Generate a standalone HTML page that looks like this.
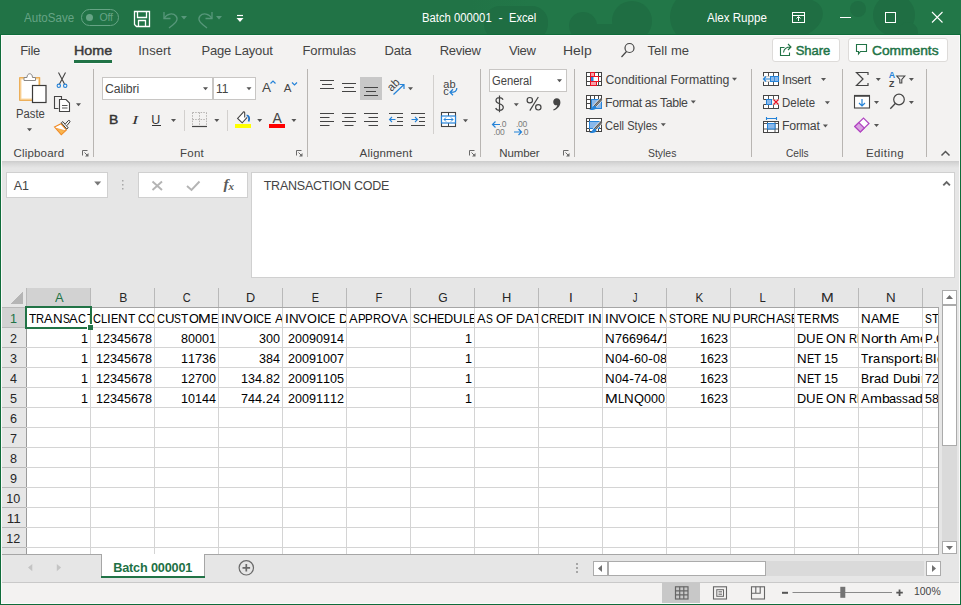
<!DOCTYPE html>
<html>
<head>
<meta charset="utf-8">
<title>Batch 000001 - Excel</title>
<style>
*{box-sizing:border-box;margin:0;padding:0}
html,body{width:961px;height:605px;overflow:hidden;background:#f3f2f1}
body{font-family:"Liberation Sans",sans-serif;font-size:12px;color:#444;position:relative}
.a{position:absolute}
.t{position:absolute;white-space:nowrap;line-height:1}
#title{left:0;top:0;width:961px;height:34px;background:#217346}
#tabs{left:0;top:34px;width:961px;height:31px;background:#f3f2f1}
#ribbon{left:0;top:65px;width:961px;height:96px;background:#f3f2f1}
#shadow{left:0;top:161px;width:961px;height:7px;background:linear-gradient(#cbcbcb,#d6d6d6 30%,#e6e6e6)}
#fbar{left:0;top:168px;width:961px;height:120px;background:#e6e6e6}
#grid{left:2px;top:288px;width:937px;height:266px;background:#fff;overflow:hidden}
#sheetbar{left:0;top:555px;width:961px;height:28px;background:#e6e6e6}
#status{left:0;top:583px;width:961px;height:22px;background:#f3f2f1}
#frame{left:0;top:34px;width:961px;height:571px;border:1px solid #0f6c3a;pointer-events:none}
#frame2{left:1px;top:35px;width:959px;height:569px;border:1px solid #fbfafa;pointer-events:none}
.sep{position:absolute;top:69px;width:1px;height:88px;background:#b8b5b2}
.ssep{position:absolute;width:1px;background:#d2d0ce}
.cell{position:absolute;height:20px;color:#000;line-height:20px;white-space:nowrap;overflow:hidden}
.cell span{position:absolute;top:1px;white-space:nowrap}
.ch{position:absolute;top:0;height:19px;width:64px;text-align:center;font-size:14px;line-height:21px;color:#262626}
.rh{position:absolute;left:0;width:24px;height:20px;text-align:center;font-size:14px;line-height:21px;color:#262626}
</style>
</head>
<body>
<div id="title" class="a"></div>
<div id="tabs" class="a"></div>
<div id="ribbon" class="a"></div>
<div id="shadow" class="a"></div>
<div id="fbar" class="a"></div>

<!--TITLE-->
<svg class="a" style="left:0;top:0" width="961" height="34">
<defs><linearGradient id="tg" x1="0" x2="1" y1="0" y2="0"><stop offset="0" stop-color="#217346"/><stop offset="0.12" stop-color="#227748"/><stop offset="1" stop-color="#227748"/></linearGradient></defs>
<rect x="470" y="0" width="491" height="34" fill="url(#tg)"/>
<g fill="#1f6e43">
<rect x="484" y="6" width="64" height="34" rx="16"/>
<circle cx="583" cy="26" r="14"/><circle cx="632" cy="21" r="20"/><rect x="575" y="24" width="60" height="12"/>
<path d="M676 0 H812 C828 6 826 24 808 34 H676 C668 24 668 10 676 0 Z"/>
<circle cx="858" cy="9" r="8"/><circle cx="894" cy="15" r="21"/><circle cx="908" cy="32" r="10"/>
</g></svg>
<div class="t" style="left:24.0px;top:11.7px;font-size:12.5px;color:#66a485;letter-spacing:0.00px;transform-origin:0 0;transform:scaleX(0.925);">AutoSave</div>
<div class="a" style="left:81px;top:9px;width:38px;height:17px;border:1px solid #66a485;border-radius:9px"></div>
<div class="a" style="left:86px;top:14px;width:7px;height:7px;border-radius:4px;background:#66a485"></div>
<div class="t" style="left:99.5px;top:12.4px;font-size:10.5px;color:#66a485;letter-spacing:-0.17px;">Off</div>
<svg class="a" style="left:129px;top:6px" width="121" height="26" fill="none" stroke="#fff" stroke-width="1.3">
<path d="M5.5 5.500 H20.500 V20.500 H7.500 L5.500 18.500 Z"/><path d="M8.500 5.500 V11.500 H17.500 V5.500"/><path d="M9.500 20.500 V14.500 H16.500 V20.500"/>
<g stroke="#57977a" stroke-width="1.3"><path d="M35 6 V12.500 H41.500"/><path d="M35 12.500 C38 7.500 44 6.500 47 10 C50.500 14.500 45 18 40 22"/></g>
<path d="M52 10 h6 l-3 3.500 z" fill="#57977a" stroke="none"/>
<g stroke="#57977a" stroke-width="1.3"><path d="M83 6 V12.500 H76.500"/><path d="M83 12.500 C80 7.500 74 6.500 71 10 C67.500 14.500 73 18 78 22"/></g>
<path d="M87 10 h6 l-3 3.500 z" fill="#57977a" stroke="none"/>
<path d="M108 9.500 h6" stroke="#fff" stroke-width="1.2"/><path d="M107.500 12 h7 l-3.500 4 z" fill="#fff" stroke="none"/>
</svg>
<div class="t" style="left:422.4px;top:12.4px;font-size:12.5px;color:#fff;letter-spacing:0.00px;transform-origin:0 0;transform:scaleX(0.903);">Batch 000001</div>
<div class="t" style="left:498.4px;top:12.4px;font-size:12.5px;color:#fff;letter-spacing:0.44px;">-</div>
<div class="t" style="left:508.6px;top:12.4px;font-size:12.5px;color:#fff;letter-spacing:0.00px;transform-origin:0 0;transform:scaleX(0.888);">Excel</div>
<div class="t" style="left:707.0px;top:12.4px;font-size:12.5px;color:#fff;letter-spacing:0.00px;transform-origin:0 0;transform:scaleX(0.926);">Alex Ruppe</div>
<svg class="a" style="left:785px;top:5px" width="170" height="26" fill="none" stroke="#fff" stroke-width="1">
<rect x="7.500" y="7.500" width="12" height="10"/><path d="M7.500 10.500 h12"/><path d="M13.500 16 v-4 M11.500 13.500 l2 -2 l2 2"/>
<path d="M55 12.500 h11"/>
<rect x="100.500" y="7.500" width="10" height="10"/>
<path d="M147 7 l10.500 10.500 M157.500 7 l-10.500 10.500" stroke-width="1.1"/>
</svg>
<!--TABS-->
<div class="t" style="left:20.3px;top:44.4px;font-size:13px;color:#444;letter-spacing:-0.37px;">File</div>
<div class="t" style="left:73.6px;top:44.4px;font-size:13px;color:#3a3a3a;letter-spacing:0.00px;-webkit-text-stroke:0.45px #3a3a3a;transform-origin:0 0;transform:scaleX(1.099);">Home</div>
<div class="a" style="left:74px;top:60px;width:38px;height:3px;background:#217346"></div>
<div class="a" style="left:74px;top:63px;width:38px;height:1px;background:#fbfafa"></div>
<div class="t" style="left:138.2px;top:44.4px;font-size:13px;color:#444;letter-spacing:0.05px;">Insert</div>
<div class="t" style="left:201.4px;top:44.4px;font-size:13px;color:#444;letter-spacing:-0.15px;">Page Layout</div>
<div class="t" style="left:302.5px;top:44.4px;font-size:13px;color:#444;letter-spacing:-0.09px;">Formulas</div>
<div class="t" style="left:384.5px;top:44.4px;font-size:13px;color:#444;letter-spacing:-0.17px;">Data</div>
<div class="t" style="left:439.7px;top:44.4px;font-size:13px;color:#444;letter-spacing:-0.28px;">Review</div>
<div class="t" style="left:508.9px;top:44.4px;font-size:13px;color:#444;letter-spacing:-0.31px;">View</div>
<div class="t" style="left:562.9px;top:44.4px;font-size:13px;color:#444;letter-spacing:0.00px;transform-origin:0 0;transform:scaleX(1.074);">Help</div>
<svg class="a" style="left:619px;top:41px" width="18" height="18" fill="none" stroke="#444" stroke-width="1.2"><circle cx="10.500" cy="7" r="4.500"/><path d="M7.500 10.500 L2.500 16"/></svg>
<div class="t" style="left:647.4px;top:44.4px;font-size:13px;color:#444;letter-spacing:0.08px;">Tell me</div>
<div class="a" style="left:772px;top:38px;width:68px;height:24px;background:#fff;border:1px solid #dddbd9;border-radius:3px"></div>
<svg class="a" style="left:778px;top:42px" width="16" height="16" fill="none" stroke="#217346" stroke-width="1.1"><path d="M6.500 5.500 H2.500 V13.500 H11.500 V10.500"/><path d="M5.500 10.500 C6 7 8.500 5 12.500 5 M10 2 l3 3 l-3 3"/></svg>
<div class="t" style="left:795.7px;top:44.4px;font-size:13px;color:#217346;letter-spacing:-0.03px;-webkit-text-stroke:0.45px #217346;">Share</div>
<div class="a" style="left:848px;top:38px;width:100px;height:24px;background:#fff;border:1px solid #dddbd9;border-radius:3px"></div>
<svg class="a" style="left:855px;top:43px" width="14" height="14" fill="none" stroke="#217346" stroke-width="1.1"><path d="M1.500 1.500 H11.500 V8.500 H5.500 L3.500 11 V8.500 H1.500 Z"/></svg>
<div class="t" style="left:871.6px;top:44.4px;font-size:13px;color:#217346;letter-spacing:0.00px;-webkit-text-stroke:0.45px #217346;transform-origin:0 0;transform:scaleX(1.059);">Comments</div>
<!--RIBBON-->
<div class="sep" style="left:93px"></div>
<div class="sep" style="left:307px"></div>
<div class="sep" style="left:480px"></div>
<div class="sep" style="left:574px"></div>
<div class="sep" style="left:751px"></div>
<div class="sep" style="left:842px"></div>
<div class="sep" style="left:926px"></div>
<div class="ssep" style="left:184px;top:110px;height:21px"></div>
<div class="ssep" style="left:227px;top:110px;height:21px"></div>
<div class="ssep" style="left:433px;top:75px;height:59px"></div>
<div class="a" style="left:102px;top:77px;width:111px;height:23px;background:#fff;border:1px solid #c8c6c4"></div>
<div class="a" style="left:213px;top:77px;width:43px;height:23px;background:#fff;border:1px solid #c8c6c4;border-left:1px solid #c8c6c4"></div>
<div class="a" style="left:489px;top:69px;width:78px;height:23px;background:#fff;border:1px solid #c8c6c4"></div>
<div class="a" style="left:360px;top:77px;width:22px;height:23px;background:#c8c8c8"></div>
<div class="t" style="left:16.0px;top:108.1px;font-size:12.3px;color:#444;letter-spacing:0.00px;transform-origin:0 0;transform:scaleX(0.916);">Paste</div>
<div class="t" style="left:13.4px;top:147.6px;font-size:11.5px;color:#444;letter-spacing:0.19px;">Clipboard</div>
<div class="t" style="left:104.9px;top:83.1px;font-size:12.3px;color:#444;letter-spacing:-0.07px;">Calibri</div>
<div class="t" style="left:216.4px;top:83.0px;font-size:12.5px;color:#444;letter-spacing:0.00px;transform-origin:0 0;transform:scaleX(0.954);">11</div>
<div class="t" style="left:180.1px;top:147.6px;font-size:11.5px;color:#444;letter-spacing:0.20px;">Font</div>
<div class="t" style="left:359.6px;top:147.6px;font-size:11.5px;color:#444;letter-spacing:0.17px;">Alignment</div>
<div class="t" style="left:491.9px;top:75.1px;font-size:12.3px;color:#444;letter-spacing:0.00px;transform-origin:0 0;transform:scaleX(0.910);">General</div>
<div class="t" style="left:499.3px;top:147.6px;font-size:11.5px;color:#444;letter-spacing:-0.12px;">Number</div>
<div class="t" style="left:605.4px;top:74.1px;font-size:12.3px;color:#444;letter-spacing:0.01px;">Conditional Formatting</div>
<div class="t" style="left:605.0px;top:97.1px;font-size:12.3px;color:#444;letter-spacing:-0.36px;">Format as Table</div>
<div class="t" style="left:605.4px;top:120.1px;font-size:12.3px;color:#444;letter-spacing:0.00px;transform-origin:0 0;transform:scaleX(0.901);">Cell Styles</div>
<div class="t" style="left:648.0px;top:147.6px;font-size:11.5px;color:#444;letter-spacing:0.00px;transform-origin:0 0;transform:scaleX(0.905);">Styles</div>
<div class="t" style="left:781.9px;top:74.1px;font-size:12.3px;color:#444;letter-spacing:-0.31px;">Insert</div>
<div class="t" style="left:782.1px;top:97.1px;font-size:12.3px;color:#444;letter-spacing:0.00px;transform-origin:0 0;transform:scaleX(0.932);">Delete</div>
<div class="t" style="left:782.0px;top:120.1px;font-size:12.3px;color:#444;letter-spacing:-0.23px;">Format</div>
<div class="t" style="left:785.8px;top:147.6px;font-size:11.5px;color:#444;letter-spacing:0.00px;transform-origin:0 0;transform:scaleX(0.883);">Cells</div>
<div class="t" style="left:865.9px;top:147.6px;font-size:11.5px;color:#444;letter-spacing:0.44px;">Editing</div>
<div class="t" style="left:108.5px;top:113.1px;font-size:13px;color:#333;letter-spacing:0.00px;-webkit-text-stroke:0.45px #333;transform-origin:0 0;transform:scaleX(1.068);">B</div>
<div class="t" style="left:131.7px;top:112.8px;font-size:13.5px;color:#333;letter-spacing:0.00px;font-style:italic;font-family:'Liberation Serif',serif;transform-origin:0 0;transform:scaleX(1.395);">I</div>
<div class="t" style="left:151.3px;top:113.5px;font-size:12.5px;color:#333;letter-spacing:0.89px;">U</div>
<div class="a" style="left:152px;top:125px;width:9px;height:1px;background:#333"></div>
<div class="t" style="left:262.0px;top:81.0px;font-size:13.5px;color:#444;letter-spacing:0.05px;">A</div>
<div class="t" style="left:283.8px;top:82.5px;font-size:11.5px;color:#444;letter-spacing:-0.12px;">A</div>
<div class="t" style="left:272.5px;top:110.9px;font-size:14px;color:#444;letter-spacing:0.72px;">A</div>
<div class="a" style="left:269px;top:124px;width:16px;height:4px;background:#ff0000"></div>
<div class="a" style="left:235px;top:124px;width:16px;height:4px;background:#ffff00"></div>
<svg class="a" style="left:0;top:65px" width="961" height="96" viewBox="0 65 961 96" fill="none">
<rect x="19.700" y="77.700" width="20" height="22.600" fill="#fbd9a5" stroke="#eaa13a" stroke-width="1"/>
<rect x="21.500" y="79.500" width="16.500" height="19" fill="#fff" stroke="none"/>
<path d="M24 80.500 V77.500 H27 C27 72.500 32.500 72.500 32.500 77.500 H35.500 V80.500 Z" fill="#fff" stroke="#8a8886" stroke-width="1"/>
<rect x="32.500" y="85.500" width="13.500" height="17" fill="#fff" stroke="#3b3a39" stroke-width="1.2"/>
<path d="M27.0 128.3 h5 l-2.500 3 z" fill="#555" stroke="none"/>
<path d="M58.500 72.500 L64.500 84 M65.500 72.500 L59.500 84" stroke="#444" stroke-width="1.1"/>
<circle cx="58.800" cy="85.800" r="1.700" stroke="#2583d8" stroke-width="1.1"/><circle cx="65.200" cy="85.800" r="1.700" stroke="#2583d8" stroke-width="1.1"/>
<path d="M58.500 108.500 H54.500 V96.500 H61.500 V99" stroke="#444" stroke-width="1.100"/>
<path d="M59.500 99.500 H66 L69.500 103 V111.500 H59.500 Z" stroke="#444" stroke-width="1.100" fill="#fff"/>
<path d="M62 105.500 h5.500 M62 108 h5.500" stroke="#444" stroke-width="0.9"/>
<path d="M76.0 103.3 h5 l-2.500 3 z" fill="#555" stroke="none"/>
<path d="M54.500 127 L61 123.800 L66.400 130 L61.300 134.600 Z" fill="#fff" stroke="#f08a24" stroke-width="1.100"/>
<path d="M56.300 128.300 L65.200 130.700 L61.300 134.300 Z" fill="#f9b64d" stroke="#f08a24" stroke-width="0.600"/>
<path d="M61.300 122.800 L62.800 121.600 L68.200 127.800 L66.700 129 Z" fill="#fff" stroke="#3b3a39" stroke-width="1"/>
<path d="M65.200 124.200 L68.200 120.700 C69 119.800 70.600 121 69.800 122 L66.900 125.600" fill="#fff" stroke="#3b3a39" stroke-width="1"/>
<path d="M82.5 155.5 V150.5 H87.5" fill="none" stroke="#6a6a6a" stroke-width="1"/><path d="M84.5 152.5 L88 156" stroke="#6a6a6a" stroke-width="1" fill="none"/><path d="M88.5 153 V156.5 H85 Z" fill="#6a6a6a" stroke="none"/>
<path d="M203.0 87.2 h5 l-2.500 3 z" fill="#555" stroke="none"/>
<path d="M246.5 87.2 h5 l-2.500 3 z" fill="#555" stroke="none"/>
<path d="M270.500 83.500 L273 81 L275.500 83.500" stroke="#2583d8" stroke-width="1.2"/>
<path d="M292 82.500 L294.500 85 L297 82.500" stroke="#2583d8" stroke-width="1.2"/>
<path d="M171.0 119 h5 l-2.500 3 z" fill="#555" stroke="none"/>
<path d="M214.3 119 h5 l-2.500 3 z" fill="#555" stroke="none"/>
<path d="M257.2 119 h5 l-2.500 3 z" fill="#555" stroke="none"/>
<path d="M291.4 119 h5 l-2.500 3 z" fill="#555" stroke="none"/>
<g stroke="#b5b3b1" stroke-width="1" stroke-dasharray="1.5 1.2"><path d="M192.500 112.500 H206.500 M192.500 119.500 H206.500 M192.500 112.500 V126 M199.500 112.500 V126 M206.500 112.500 V126"/></g>
<path d="M192 126.5 H207" stroke="#444" stroke-width="1.2" fill="none"/>
<path d="M243.200 112.300 L237.600 118.400 L242.200 122.800 L247.200 117.300" fill="#fff" stroke="#444" stroke-width="1.100"/>
<path d="M243 112.600 C243.300 111.300 244.700 111.400 244.700 112.800 V117.600" stroke="#444" stroke-width="1.100"/>
<path d="M246.600 115.300 C248.800 115.500 249.900 117.500 248.600 121.500" stroke="#1e6fc4" stroke-width="1.800"/>
<path d="M296.5 155.5 V150.5 H301.5" fill="none" stroke="#6a6a6a" stroke-width="1"/><path d="M298.5 152.5 L302 156" stroke="#6a6a6a" stroke-width="1" fill="none"/><path d="M302.5 153 V156.5 H299 Z" fill="#6a6a6a" stroke="none"/>
<path d="M320 80.5 H334" stroke="#444" stroke-width="1" fill="none"/>
<path d="M322 84.5 H332" stroke="#444" stroke-width="1" fill="none"/>
<path d="M320 88.5 H334" stroke="#444" stroke-width="1" fill="none"/>
<path d="M342 83.5 H356" stroke="#444" stroke-width="1" fill="none"/>
<path d="M344 87.5 H354" stroke="#444" stroke-width="1" fill="none"/>
<path d="M342 91.5 H356" stroke="#444" stroke-width="1" fill="none"/>
<path d="M364 87.5 H378" stroke="#444" stroke-width="1" fill="none"/>
<path d="M366 91.5 H376" stroke="#444" stroke-width="1" fill="none"/>
<path d="M364 95.5 H378" stroke="#444" stroke-width="1" fill="none"/>
<path d="M320 113.5 H334" stroke="#444" stroke-width="1" fill="none"/>
<path d="M320 117.5 H329.5" stroke="#444" stroke-width="1" fill="none"/>
<path d="M320 121.5 H334" stroke="#444" stroke-width="1" fill="none"/>
<path d="M320 125.5 H329.5" stroke="#444" stroke-width="1" fill="none"/>
<path d="M342 113.5 H356" stroke="#444" stroke-width="1" fill="none"/>
<path d="M344.5 117.5 H353.5" stroke="#444" stroke-width="1" fill="none"/>
<path d="M342 121.5 H356" stroke="#444" stroke-width="1" fill="none"/>
<path d="M344.5 125.5 H353.5" stroke="#444" stroke-width="1" fill="none"/>
<path d="M364 113.5 H378" stroke="#444" stroke-width="1" fill="none"/>
<path d="M368.5 117.5 H378" stroke="#444" stroke-width="1" fill="none"/>
<path d="M364 121.5 H378" stroke="#444" stroke-width="1" fill="none"/>
<path d="M368.5 125.5 H378" stroke="#444" stroke-width="1" fill="none"/>
<path d="M389 113.5 H403" stroke="#444" stroke-width="1" fill="none"/>
<path d="M397 117.5 H403" stroke="#444" stroke-width="1" fill="none"/>
<path d="M397 121.5 H403" stroke="#444" stroke-width="1" fill="none"/>
<path d="M389 125.5 H403" stroke="#444" stroke-width="1" fill="none"/>
<path d="M395.500 119.500 H389.500 M392 117 L389.500 119.500 L392 122" stroke="#2583d8" stroke-width="1.1"/>
<path d="M411 113.5 H425" stroke="#444" stroke-width="1" fill="none"/>
<path d="M419 117.5 H425" stroke="#444" stroke-width="1" fill="none"/>
<path d="M419 121.5 H425" stroke="#444" stroke-width="1" fill="none"/>
<path d="M411 125.5 H425" stroke="#444" stroke-width="1" fill="none"/>
<path d="M411.500 119.500 H417.500 M415 117 L417.500 119.500 L415 122" stroke="#2583d8" stroke-width="1.1"/>
<text x="0" y="0" transform="translate(391.400 92) rotate(-45)" font-family="Liberation Sans" font-size="11.500" fill="#444" stroke="none">ab</text>
<path d="M393.500 94.500 L404 84.500 M399.500 84.500 H404 V89" stroke="#2583d8" stroke-width="1.2"/>
<path d="M408.0 87.2 h5 l-2.500 3 z" fill="#555" stroke="none"/>
<text x="443.200" y="87.800" font-family="Liberation Sans" font-size="11" fill="#444" stroke="none" letter-spacing="0.300">ab</text>
<text x="443.200" y="94.900" font-family="Liberation Sans" font-size="11" fill="#444" stroke="none">c</text>
<path d="M456.800 88 C456.800 91.500 455 92.300 450.300 92.300 M453 89.300 L450 92.300 L453 95.300" stroke="#2583d8" stroke-width="1.300"/>
<rect x="441.500" y="112.500" width="14" height="14" stroke="#444" stroke-width="1.100" fill="#fff"/>
<path d="M448.500 112.500 V116 M448.500 123 V126.500" stroke="#444" stroke-width="1"/>
<rect x="441.500" y="116" width="14" height="7" stroke="#2583d8" stroke-width="1.200" fill="#fff"/>
<path d="M444 119.500 H453 M446 117.500 L444 119.500 L446 121.500 M451 117.500 L453 119.500 L451 121.500" stroke="#2583d8" stroke-width="1"/>
<path d="M463.0 119.3 h5 l-2.500 3 z" fill="#555" stroke="none"/>
<path d="M469.5 155.5 V150.5 H474.5" fill="none" stroke="#6a6a6a" stroke-width="1"/><path d="M471.5 152.5 L475 156" stroke="#6a6a6a" stroke-width="1" fill="none"/><path d="M475.5 153 V156.5 H472 Z" fill="#6a6a6a" stroke="none"/>
<path d="M557.0 79.3 h5 l-2.500 3 z" fill="#555" stroke="none"/>
<path d="M513.8 103.2 h5 l-2.500 3 z" fill="#555" stroke="none"/>
<path d="M503 99.800 C502.500 98.300 501 97.600 499.500 97.600 C497.500 97.600 496 98.800 496 100.500 C496 102.500 497.800 103.200 499.500 103.800 C501.500 104.500 503.300 105.300 503.300 107.300 C503.300 109.200 501.600 110.300 499.500 110.300 C497.600 110.300 496.200 109.500 495.700 108 M499.500 95.400 V112.300" stroke="#444" stroke-width="1.200"/>
<circle cx="529.800" cy="100.200" r="2.700" stroke="#444" stroke-width="1.200"/><circle cx="538.300" cy="107.300" r="2.700" stroke="#444" stroke-width="1.200"/><path d="M538.300 97 L529.800 110.600" stroke="#444" stroke-width="1.200"/>
<path d="M556.800 98.300 C558.900 98.300 560.400 99.900 560.400 102.200 C560.400 106 557.500 109.300 553.600 110.400 L553.200 109.500 C555.400 108.500 556.900 106.900 557.300 105.200 C557.100 105.300 556.800 105.300 556.500 105.300 C554.600 105.300 553.200 103.800 553.200 101.900 C553.200 99.900 554.700 98.300 556.800 98.300 Z" fill="#444" stroke="none"/>
<text x="499.500" y="127" font-family="Liberation Sans" font-size="8.5" fill="#7a7a7a" stroke="none">.0</text>
<text x="493.500" y="135.200" font-family="Liberation Sans" font-size="8.5" fill="#7a7a7a" stroke="none" letter-spacing="-0.3">.00</text>
<path d="M500 124.500 H492.500 M495.500 121.500 L492.500 124.500 L495.500 127.500" stroke="#2583d8" stroke-width="1.2"/>
<text x="516" y="127" font-family="Liberation Sans" font-size="8.5" fill="#7a7a7a" stroke="none" letter-spacing="-0.3">.00</text>
<text x="521.500" y="135.200" font-family="Liberation Sans" font-size="8.5" fill="#7a7a7a" stroke="none">.0</text>
<path d="M514 132 H521.500 M518.500 129 L521.500 132 L518.500 135" stroke="#2583d8" stroke-width="1.2"/>
<path d="M563.5 155.5 V150.5 H568.5" fill="none" stroke="#6a6a6a" stroke-width="1"/><path d="M565.5 152.5 L569 156" stroke="#6a6a6a" stroke-width="1" fill="none"/><path d="M569.5 153 V156.5 H566 Z" fill="#6a6a6a" stroke="none"/>
<rect x="586.500" y="72.500" width="15" height="13" stroke="#444" stroke-width="1" fill="#fff"/>
<path d="M590.500 72.500 V85.500 M594.500 72.500 V85.500 M598.500 72.500 V85.500 M586.500 76.500 H601.500 M586.500 81.500 H601.500" stroke="#444" stroke-width="1"/>
<rect x="590.500" y="72.500" width="4" height="4" fill="#f6a0a8" stroke="#e81123" stroke-width="1"/>
<rect x="590.500" y="76.500" width="8" height="5" fill="#fff" stroke="#e81123" stroke-width="1"/>
<rect x="591" y="77" width="2.500" height="4" fill="#2583d8"/>
<rect x="590.500" y="81.500" width="6" height="4" fill="#f6a0a8" stroke="#e81123" stroke-width="1"/>
<rect x="586.500" y="95.500" width="15" height="13" stroke="#444" stroke-width="1" fill="#fff"/>
<path d="M590.500 95.500 V108.500 M594.500 95.500 V108.500 M598.500 95.500 V108.500 M586.500 99.500 H601.500 M586.500 103.500 H601.500" stroke="#444" stroke-width="1"/>
<rect x="591.500" y="99.500" width="10" height="9" fill="#8ab8ea" stroke="#2583d8" stroke-width="1"/>
<path d="M601.5 99 L594 107" stroke="#f3f2f1" stroke-width="3.400"/><path d="M601.5 99 L594.5 106.5" stroke="#444" stroke-width="2.2"/><path d="M601 99.5 L595 106" stroke="#bbb" stroke-width="0.7"/><path d="M595 105.5 C592 105.5 593 109 589 109.5 C593 111 596.5 109.5 596.5 107 Z" fill="#2583d8" stroke="none"/>
<rect x="586.500" y="118.500" width="15" height="13" stroke="#444" stroke-width="1" fill="#fff"/>
<path d="M589.500 118.500 V131.500 M586.500 121.500 H601.500 M586.500 128.500 H601.500 M598.500 121.500 V131.500" stroke="#444" stroke-width="1"/>
<rect x="589.500" y="121.500" width="10" height="7" fill="#8ab8ea" stroke="#2583d8" stroke-width="1"/>
<path d="M601.5 122 L594 130" stroke="#f3f2f1" stroke-width="3.400"/><path d="M601.5 122 L594.5 129.5" stroke="#444" stroke-width="2.2"/><path d="M601 122.5 L595 129" stroke="#bbb" stroke-width="0.7"/><path d="M595 128.5 C592 128.5 593 132 589 132.5 C593 134 596.5 132.5 596.5 130 Z" fill="#2583d8" stroke="none"/>
<path d="M732.0 77.8 h5 l-2.500 3 z" fill="#555" stroke="none"/>
<path d="M690.8 100.5 h5 l-2.500 3 z" fill="#555" stroke="none"/>
<path d="M660.8 123.3 h5 l-2.500 3 z" fill="#555" stroke="none"/>
<rect x="763.5" y="72.5" width="15" height="13" stroke="#444" stroke-width="1" fill="#fff"/><path d="M768.5 72.5 V85.5 M773.5 72.5 V85.5 M763.5 76.8 H778.5 M763.5 81.2 H778.5" stroke="#444" stroke-width="0.9"/>
<rect x="763" y="76.300" width="8" height="5.400" fill="#f3f2f1"/>
<rect x="770.500" y="76.500" width="8" height="5" fill="#8ab8ea" stroke="#2583d8" stroke-width="1"/>
<path d="M774.500 76.500 V81.500" stroke="#2583d8" stroke-width="0.8"/>
<path d="M771 79 H763.500 M766 76.500 L763.500 79 L766 81.500" stroke="#2583d8" stroke-width="1.2"/>
<rect x="763.5" y="95.5" width="15" height="13" stroke="#444" stroke-width="1" fill="#fff"/><path d="M768.5 95.5 V108.5 M773.5 95.5 V108.5 M763.5 99.8 H778.5 M763.5 104.2 H778.5" stroke="#444" stroke-width="0.9"/>
<rect x="762.500" y="99.300" width="17" height="5.400" fill="#f3f2f1"/>
<path d="M763.500 99.500 H766 M763.500 104.500 H766" stroke="#444" stroke-width="1"/>
<rect x="766.500" y="99.500" width="5" height="5" fill="#8ab8ea" stroke="#2583d8" stroke-width="1"/>
<path d="M773.500 99.500 L778.500 104.500 M778.500 99.500 L773.500 104.500" stroke="#e81123" stroke-width="1.2"/>
<rect x="763.5" y="121.500" width="15" height="11" stroke="#444" stroke-width="1" fill="#fff"/>
<path d="M767.5 121.500 V132.500 M775.0 121.500 V132.500 M763.5 123.500 H778.5 M763.5 129 H778.5" stroke="#444" stroke-width="0.9"/>
<rect x="767.500" y="123.500" width="7.500" height="5.500" fill="#8ab8ea" stroke="#2583d8" stroke-width="1"/>
<path d="M766.500 118.500 H776.500 M766.500 117 V120 M776.500 117 V120" stroke="#2583d8" stroke-width="1.1"/>
<path d="M821.0 78 h5 l-2.500 3 z" fill="#555" stroke="none"/>
<path d="M824.9 101.2 h5 l-2.500 3 z" fill="#555" stroke="none"/>
<path d="M822.9 124.4 h5 l-2.500 3 z" fill="#555" stroke="none"/>
<path d="M868 75 V72.500 H856.500 L863 79 L856.500 85.500 H868 V83" stroke="#444" stroke-width="1.2"/>
<path d="M875.8 78 h5 l-2.500 3 z" fill="#555" stroke="none"/>
<text x="888.800" y="78" font-family="Liberation Sans" font-size="8.800" font-weight="bold" fill="#2583d8" stroke="none">A</text>
<text x="889" y="86.600" font-family="Liberation Sans" font-size="8.800" font-weight="bold" fill="#444" stroke="none">Z</text>
<path d="M896.800 76 H904.800 L901.800 79.500 V83 H899.800 V79.500 Z" stroke="#444" stroke-width="1.100"/>
<path d="M908.9 78 h5 l-2.500 3 z" fill="#555" stroke="none"/>
<rect x="854.500" y="96" width="15" height="12" stroke="#444" stroke-width="1.100" fill="#fff"/>
<path d="M854 95.7 H870" stroke="#444" stroke-width="1.6" fill="none"/>
<path d="M862 99 V106 M859 103 L862 106 L865 103" stroke="#2583d8" stroke-width="1.2"/>
<path d="M874.0 101 h5 l-2.500 3 z" fill="#555" stroke="none"/>
<circle cx="899" cy="99.500" r="5.300" stroke="#444" stroke-width="1.2"/><path d="M895.300 103.500 L890.300 108.700" stroke="#444" stroke-width="1.3"/>
<path d="M908.9 101 h5 l-2.500 3 z" fill="#555" stroke="none"/>
<path d="M854.800 126.500 L863.500 118 L869 123.500 L860.300 132 Z" stroke="#b146c2" stroke-width="1.2" fill="#fff"/>
<path d="M854.800 126.500 L858.800 122.500 L864.300 128 L860.300 132 Z" fill="#d9a3e0" stroke="#b146c2" stroke-width="1.2"/>
<path d="M874.0 124 h5 l-2.500 3 z" fill="#555" stroke="none"/>
<path d="M941.500 155.500 L945.500 151.500 L949.500 155.500" stroke="#555" stroke-width="1.5"/>
</svg>
<!--FORMULA BAR-->
<div class="a" style="left:6px;top:172px;width:102px;height:26px;background:#fff;border:1px solid #d0d0d0"></div>
<div class="t" style="left:13.8px;top:180.1px;font-size:12.5px;color:#444;letter-spacing:-0.16px;">A1</div>
<svg class="a" style="left:93px;top:179px" width="12" height="10"><path d="M1.200 2.500 h7 l-3.500 4 z" fill="#777"/></svg>
<svg class="a" style="left:121px;top:178px" width="4" height="14" fill="#a8a8a8"><rect x="1" y="2" width="1.500" height="1.500"/><rect x="1" y="6" width="1.500" height="1.500"/><rect x="1" y="10" width="1.500" height="1.500"/></svg>
<div class="a" style="left:138px;top:172px;width:110px;height:26px;background:#fff;border:1px solid #d0d0d0"></div>
<svg class="a" style="left:138px;top:173px" width="110" height="25" fill="none" stroke="#b4b4b4" stroke-width="1.900">
<path d="M14.500 8.500 L24 17 M24 8.500 L14.500 17"/>
<path d="M49 13 L53.500 17 L61.500 8.500"/>
</svg>
<div class="t" style="left:223.500px;top:176px;font-family:'Liberation Serif',serif;font-style:italic;font-weight:bold;font-size:15.500px;color:#5a5a5a;letter-spacing:-0.3px">f<span style="font-size:11px;position:relative;top:0.500px">x</span></div>
<div class="a" style="left:251px;top:172px;width:704px;height:106px;background:#fff;border:1px solid #d0d0d0"></div>
<div class="t" style="left:263.7px;top:180.1px;font-size:12.5px;color:#444;letter-spacing:-0.23px;">TRANSACTION CODE</div>
<svg class="a" style="left:940px;top:178px" width="12" height="10" fill="none" stroke="#666" stroke-width="1.900"><path d="M3.300 7.300 L6.600 4 L9.900 7.300"/></svg>
<div id="grid" class="a">
<style>.cell i{display:inline-block;font-style:normal;transform-origin:0 0;height:18px;vertical-align:top;overflow:visible}.g32{width:3.37px;transform:scaleX(0.933)}.g45{width:5px;transform:scaleX(1.155)}.g46{width:3.76px;transform:scaleX(1.041)}.g47{width:5.75px;transform:scaleX(1.592)}.g48{width:7px;transform:scaleX(0.968)}.g49{width:7px;transform:scaleX(0.968)}.g50{width:7px;transform:scaleX(0.968)}.g51{width:7px;transform:scaleX(0.968)}.g52{width:7px;transform:scaleX(0.968)}.g53{width:7px;transform:scaleX(0.968)}.g54{width:7px;transform:scaleX(0.968)}.g55{width:7px;transform:scaleX(0.968)}.g56{width:7px;transform:scaleX(0.968)}.g57{width:7px;transform:scaleX(0.968)}.g65{width:8.62px;transform:scaleX(0.994)}.g66{width:8.1px;transform:scaleX(0.934)}.g67{width:7.94px;transform:scaleX(0.846)}.g68{width:9.17px;transform:scaleX(0.977)}.g69{width:7.28px;transform:scaleX(0.840)}.g70{width:6.85px;transform:scaleX(0.863)}.g72{width:9.28px;transform:scaleX(0.988)}.g73{width:3.75px;transform:scaleX(1.038)}.g76{width:6.26px;transform:scaleX(0.866)}.g77{width:12.74px;transform:scaleX(1.176)}.g78{width:9.62px;transform:scaleX(1.025)}.g79{width:9.87px;transform:scaleX(0.976)}.g80{width:7.7px;transform:scaleX(0.888)}.g81{width:10.03px;transform:scaleX(0.992)}.g82{width:8.09px;transform:scaleX(0.862)}.g83{width:6.85px;transform:scaleX(0.790)}.g84{width:7.26px;transform:scaleX(0.914)}.g85{width:9.56px;transform:scaleX(1.018)}.g86{width:8.45px;transform:scaleX(0.975)}.g97{width:7.14px;transform:scaleX(0.988)}.g98{width:7.83px;transform:scaleX(1.083)}.g100{width:7.83px;transform:scaleX(1.083)}.g101{width:7.41px;transform:scaleX(1.025)}.g103{width:7.01px;transform:scaleX(0.970)}.g104{width:7.83px;transform:scaleX(1.083)}.g105{width:3.42px;transform:scaleX(1.184)}.g108{width:3.42px;transform:scaleX(1.184)}.g109{width:11.9px;transform:scaleX(1.099)}.g110{width:7.83px;transform:scaleX(1.083)}.g111{width:7.86px;transform:scaleX(1.087)}.g112{width:7.83px;transform:scaleX(1.083)}.g114{width:5.19px;transform:scaleX(1.199)}.g115{width:5.83px;transform:scaleX(0.897)}.g116{width:4.99px;transform:scaleX(1.382)}.g117{width:7.83px;transform:scaleX(1.083)}.g120{width:6.45px;transform:scaleX(0.992)}</style>
<div class="a" style="left:0;top:0;width:938px;height:19px;background:#e6e6e6"></div>
<div class="a" style="left:0;top:0;width:24px;height:266px;background:#e6e6e6"></div>
<div class="a" style="left:25px;top:0;width:63px;height:19px;background:#d2d2d2"></div>
<div class="a" style="left:0;top:20px;width:24px;height:20px;background:#d2d2d2"></div>
<svg class="a" style="left:0;top:0" width="937" height="266" shape-rendering="crispEdges"><line x1="24.5" y1="19" x2="24.5" y2="266" stroke="#9b9b9b"/><line x1="24.5" y1="0" x2="24.5" y2="19" stroke="#b9b9b9"/><line x1="88.5" y1="19" x2="88.5" y2="266" stroke="#d4d4d4"/><line x1="88.5" y1="0" x2="88.5" y2="19" stroke="#b9b9b9"/><line x1="152.5" y1="19" x2="152.5" y2="266" stroke="#d4d4d4"/><line x1="152.5" y1="0" x2="152.5" y2="19" stroke="#b9b9b9"/><line x1="216.5" y1="19" x2="216.5" y2="266" stroke="#d4d4d4"/><line x1="216.5" y1="0" x2="216.5" y2="19" stroke="#b9b9b9"/><line x1="280.5" y1="19" x2="280.5" y2="266" stroke="#d4d4d4"/><line x1="280.5" y1="0" x2="280.5" y2="19" stroke="#b9b9b9"/><line x1="344.5" y1="19" x2="344.5" y2="266" stroke="#d4d4d4"/><line x1="344.5" y1="0" x2="344.5" y2="19" stroke="#b9b9b9"/><line x1="408.5" y1="19" x2="408.5" y2="266" stroke="#d4d4d4"/><line x1="408.5" y1="0" x2="408.5" y2="19" stroke="#b9b9b9"/><line x1="472.5" y1="19" x2="472.5" y2="266" stroke="#d4d4d4"/><line x1="472.5" y1="0" x2="472.5" y2="19" stroke="#b9b9b9"/><line x1="536.5" y1="19" x2="536.5" y2="266" stroke="#d4d4d4"/><line x1="536.5" y1="0" x2="536.5" y2="19" stroke="#b9b9b9"/><line x1="600.5" y1="19" x2="600.5" y2="266" stroke="#d4d4d4"/><line x1="600.5" y1="0" x2="600.5" y2="19" stroke="#b9b9b9"/><line x1="664.5" y1="19" x2="664.5" y2="266" stroke="#d4d4d4"/><line x1="664.5" y1="0" x2="664.5" y2="19" stroke="#b9b9b9"/><line x1="728.5" y1="19" x2="728.5" y2="266" stroke="#d4d4d4"/><line x1="728.5" y1="0" x2="728.5" y2="19" stroke="#b9b9b9"/><line x1="792.5" y1="19" x2="792.5" y2="266" stroke="#d4d4d4"/><line x1="792.5" y1="0" x2="792.5" y2="19" stroke="#b9b9b9"/><line x1="856.5" y1="19" x2="856.5" y2="266" stroke="#d4d4d4"/><line x1="856.5" y1="0" x2="856.5" y2="19" stroke="#b9b9b9"/><line x1="920.5" y1="19" x2="920.5" y2="266" stroke="#d4d4d4"/><line x1="920.5" y1="0" x2="920.5" y2="19" stroke="#b9b9b9"/><line x1="984.5" y1="19" x2="984.5" y2="266" stroke="#d4d4d4"/><line x1="984.5" y1="0" x2="984.5" y2="19" stroke="#b9b9b9"/><line x1="24" y1="19.5" x2="938" y2="19.5" stroke="#d4d4d4"/><line x1="0" y1="19.5" x2="24" y2="19.5" stroke="#b9b9b9"/><path d="M21 4 L21 16 L9 16 Z" fill="#b5b5b5" shape-rendering="auto"/><line x1="24" y1="39.5" x2="938" y2="39.5" stroke="#d4d4d4"/><line x1="0" y1="39.5" x2="24" y2="39.5" stroke="#b9b9b9"/><path d="M21 4 L21 16 L9 16 Z" fill="#b5b5b5" shape-rendering="auto"/><line x1="24" y1="59.5" x2="938" y2="59.5" stroke="#d4d4d4"/><line x1="0" y1="59.5" x2="24" y2="59.5" stroke="#b9b9b9"/><path d="M21 4 L21 16 L9 16 Z" fill="#b5b5b5" shape-rendering="auto"/><line x1="24" y1="79.5" x2="938" y2="79.5" stroke="#d4d4d4"/><line x1="0" y1="79.5" x2="24" y2="79.5" stroke="#b9b9b9"/><path d="M21 4 L21 16 L9 16 Z" fill="#b5b5b5" shape-rendering="auto"/><line x1="24" y1="99.5" x2="938" y2="99.5" stroke="#d4d4d4"/><line x1="0" y1="99.5" x2="24" y2="99.5" stroke="#b9b9b9"/><path d="M21 4 L21 16 L9 16 Z" fill="#b5b5b5" shape-rendering="auto"/><line x1="24" y1="119.5" x2="938" y2="119.5" stroke="#d4d4d4"/><line x1="0" y1="119.5" x2="24" y2="119.5" stroke="#b9b9b9"/><path d="M21 4 L21 16 L9 16 Z" fill="#b5b5b5" shape-rendering="auto"/><line x1="24" y1="139.5" x2="938" y2="139.5" stroke="#d4d4d4"/><line x1="0" y1="139.5" x2="24" y2="139.5" stroke="#b9b9b9"/><path d="M21 4 L21 16 L9 16 Z" fill="#b5b5b5" shape-rendering="auto"/><line x1="24" y1="159.5" x2="938" y2="159.5" stroke="#d4d4d4"/><line x1="0" y1="159.5" x2="24" y2="159.5" stroke="#b9b9b9"/><path d="M21 4 L21 16 L9 16 Z" fill="#b5b5b5" shape-rendering="auto"/><line x1="24" y1="179.5" x2="938" y2="179.5" stroke="#d4d4d4"/><line x1="0" y1="179.5" x2="24" y2="179.5" stroke="#b9b9b9"/><path d="M21 4 L21 16 L9 16 Z" fill="#b5b5b5" shape-rendering="auto"/><line x1="24" y1="199.5" x2="938" y2="199.5" stroke="#d4d4d4"/><line x1="0" y1="199.5" x2="24" y2="199.5" stroke="#b9b9b9"/><path d="M21 4 L21 16 L9 16 Z" fill="#b5b5b5" shape-rendering="auto"/><line x1="24" y1="219.5" x2="938" y2="219.5" stroke="#d4d4d4"/><line x1="0" y1="219.5" x2="24" y2="219.5" stroke="#b9b9b9"/><path d="M21 4 L21 16 L9 16 Z" fill="#b5b5b5" shape-rendering="auto"/><line x1="24" y1="239.5" x2="938" y2="239.5" stroke="#d4d4d4"/><line x1="0" y1="239.5" x2="24" y2="239.5" stroke="#b9b9b9"/><path d="M21 4 L21 16 L9 16 Z" fill="#b5b5b5" shape-rendering="auto"/><line x1="24" y1="259.5" x2="938" y2="259.5" stroke="#d4d4d4"/><line x1="0" y1="259.5" x2="24" y2="259.5" stroke="#b9b9b9"/><path d="M21 4 L21 16 L9 16 Z" fill="#b5b5b5" shape-rendering="auto"/><line x1="24" y1="279.5" x2="938" y2="279.5" stroke="#d4d4d4"/><line x1="0" y1="279.5" x2="24" y2="279.5" stroke="#b9b9b9"/><path d="M21 4 L21 16 L9 16 Z" fill="#b5b5b5" shape-rendering="auto"/><line x1="24" y1="19.5" x2="937" y2="19.5" stroke="#a6a6a6"/></svg>
<div class="t" style="left:52.7px;top:2.6px;font-size:13.0px;color:#217346;transform:scaleX(0.994)">A</div>
<div class="t" style="left:116.7px;top:2.6px;font-size:13.0px;color:#262626;transform:scaleX(0.934)">B</div>
<div class="t" style="left:180.3px;top:2.6px;font-size:13.0px;color:#262626;transform:scaleX(0.846)">C</div>
<div class="t" style="left:244.3px;top:2.6px;font-size:13.0px;color:#262626;transform:scaleX(0.977)">D</div>
<div class="t" style="left:308.7px;top:2.6px;font-size:13.0px;color:#262626;transform:scaleX(0.840)">E</div>
<div class="t" style="left:373.0px;top:2.6px;font-size:13.0px;color:#262626;transform:scaleX(0.863)">F</div>
<div class="t" style="left:435.9px;top:2.6px;font-size:13.0px;color:#262626;transform:scaleX(0.930)">G</div>
<div class="t" style="left:500.3px;top:2.6px;font-size:13.0px;color:#262626;transform:scaleX(0.988)">H</div>
<div class="t" style="left:567.2px;top:2.6px;font-size:13.0px;color:#262626;transform:scaleX(1.038)">I</div>
<div class="t" style="left:629.8px;top:2.6px;font-size:13.0px;color:#262626;transform:scaleX(0.731)">J</div>
<div class="t" style="left:692.7px;top:2.6px;font-size:13.0px;color:#262626;transform:scaleX(0.893)">K</div>
<div class="t" style="left:757.4px;top:2.6px;font-size:13.0px;color:#262626;transform:scaleX(0.866)">L</div>
<div class="t" style="left:819.6px;top:2.6px;font-size:13.0px;color:#262626;transform:scaleX(1.176)">M</div>
<div class="t" style="left:884.3px;top:2.6px;font-size:13.0px;color:#262626;transform:scaleX(1.025)">N</div>
<div class="t" style="left:947.9px;top:2.6px;font-size:13.0px;color:#262626;transform:scaleX(0.976)">O</div>
<div class="t" style="left:7.9px;top:23.9px;font-size:13.0px;color:#217346;transform:scaleX(0.968)">1</div>
<div class="t" style="left:7.9px;top:43.9px;font-size:13.0px;color:#262626;transform:scaleX(0.968)">2</div>
<div class="t" style="left:7.9px;top:63.9px;font-size:13.0px;color:#262626;transform:scaleX(0.968)">3</div>
<div class="t" style="left:7.9px;top:83.9px;font-size:13.0px;color:#262626;transform:scaleX(0.968)">4</div>
<div class="t" style="left:7.9px;top:103.9px;font-size:13.0px;color:#262626;transform:scaleX(0.968)">5</div>
<div class="t" style="left:7.9px;top:123.9px;font-size:13.0px;color:#262626;transform:scaleX(0.968)">6</div>
<div class="t" style="left:7.9px;top:143.9px;font-size:13.0px;color:#262626;transform:scaleX(0.968)">7</div>
<div class="t" style="left:7.9px;top:163.9px;font-size:13.0px;color:#262626;transform:scaleX(0.968)">8</div>
<div class="t" style="left:7.9px;top:183.9px;font-size:13.0px;color:#262626;transform:scaleX(0.968)">9</div>
<div class="t" style="left:4.3px;top:203.9px;font-size:13.0px;color:#262626;transform:scaleX(0.968)">10</div>
<div class="t" style="left:4.8px;top:223.9px;font-size:13.0px;color:#262626;transform:scaleX(1.037)">11</div>
<div class="t" style="left:4.3px;top:243.9px;font-size:13.0px;color:#262626;transform:scaleX(0.968)">12</div>
<div class="t" style="left:4.3px;top:263.9px;font-size:13.0px;color:#262626;transform:scaleX(0.968)">13</div>
<div class="cell" style="left:25px;top:20px;width:63px;font-size:13.0px"><span style="left:2px"><i class="g84">T</i><i class="g82">R</i><i class="g65">A</i><i class="g78">N</i><i class="g83">S</i><i class="g65">A</i><i class="g67">C</i><i style="width:1px"></i><i class="g84">T</i><i class="g73">I</i><i class="g79">O</i></span></div>
<div class="cell" style="left:89px;top:20px;width:63px;font-size:13.0px"><span style="left:2px"><i class="g67">C</i><i class="g76">L</i><i class="g73">I</i><i class="g69">E</i><i class="g78">N</i><i class="g84">T</i><i class="g32">&nbsp;</i><i class="g67">C</i><i class="g79">O</i><i class="g68">D</i></span></div>
<div class="cell" style="left:153px;top:20px;width:63px;font-size:13.0px"><span style="left:2px"><i class="g67">C</i><i class="g85">U</i><i class="g83">S</i><i class="g84">T</i><i class="g79">O</i><i class="g77">M</i><i class="g69">E</i><i class="g82">R</i><i class="g32">&nbsp;</i></span></div>
<div class="cell" style="left:217px;top:20px;width:63px;font-size:13.0px"><span style="left:2px"><i class="g73">I</i><i class="g78">N</i><i class="g86">V</i><i class="g79">O</i><i class="g73">I</i><i class="g67">C</i><i class="g69">E</i><i class="g32">&nbsp;</i><i class="g65">A</i><i class="g77">M</i></span></div>
<div class="cell" style="left:281px;top:20px;width:63px;font-size:13.0px"><span style="left:2px"><i class="g73">I</i><i class="g78">N</i><i class="g86">V</i><i class="g79">O</i><i class="g73">I</i><i class="g67">C</i><i class="g69">E</i><i class="g32">&nbsp;</i><i class="g68">D</i><i class="g65">A</i><i class="g84">T</i></span></div>
<div class="cell" style="left:345px;top:20px;width:63px;font-size:13.0px"><span style="left:2px"><i class="g65">A</i><i class="g80">P</i><i class="g80">P</i><i class="g82">R</i><i class="g79">O</i><i class="g86">V</i><i class="g65">A</i></span></div>
<div class="cell" style="left:409px;top:20px;width:63px;font-size:13.0px"><span style="left:2px"><i class="g83">S</i><i class="g67">C</i><i class="g72">H</i><i class="g69">E</i><i class="g68">D</i><i class="g85">U</i><i class="g76">L</i><i class="g69">E</i></span></div>
<div class="cell" style="left:473px;top:20px;width:63px;font-size:13.0px"><span style="left:2px"><i class="g65">A</i><i class="g83">S</i><i class="g32">&nbsp;</i><i class="g79">O</i><i class="g70">F</i><i class="g32">&nbsp;</i><i class="g68">D</i><i class="g65">A</i><i class="g84">T</i><i class="g69">E</i></span></div>
<div class="cell" style="left:537px;top:20px;width:63px;font-size:13.0px"><span style="left:2px"><i class="g67">C</i><i class="g82">R</i><i class="g69">E</i><i class="g68">D</i><i class="g73">I</i><i class="g84">T</i><i class="g32">&nbsp;</i><i class="g73">I</i><i class="g78">N</i></span></div>
<div class="cell" style="left:601px;top:20px;width:63px;font-size:13.0px"><span style="left:2px"><i class="g73">I</i><i class="g78">N</i><i class="g86">V</i><i class="g79">O</i><i class="g73">I</i><i class="g67">C</i><i class="g69">E</i><i class="g32">&nbsp;</i><i class="g78">N</i><i class="g85">U</i></span></div>
<div class="cell" style="left:665px;top:20px;width:63px;font-size:13.0px"><span style="left:2px"><i class="g83">S</i><i class="g84">T</i><i class="g79">O</i><i class="g82">R</i><i class="g69">E</i><i class="g32">&nbsp;</i><i class="g78">N</i><i class="g85">U</i><i class="g77">M</i></span></div>
<div class="cell" style="left:729px;top:20px;width:63px;font-size:13.0px"><span style="left:2px"><i class="g80">P</i><i class="g85">U</i><i class="g82">R</i><i class="g67">C</i><i class="g72">H</i><i class="g65">A</i><i class="g83">S</i><i class="g69">E</i><i class="g32">&nbsp;</i><i class="g79">O</i></span></div>
<div class="cell" style="left:793px;top:20px;width:63px;font-size:13.0px"><span style="left:2px"><i class="g84">T</i><i class="g69">E</i><i class="g82">R</i><i class="g77">M</i><i class="g83">S</i></span></div>
<div class="cell" style="left:857px;top:20px;width:63px;font-size:13.0px"><span style="left:2px"><i class="g78">N</i><i class="g65">A</i><i class="g77">M</i><i class="g69">E</i></span></div>
<div class="cell" style="left:921px;top:20px;width:15px;font-size:13.0px"><span style="left:2px"><i class="g83">S</i><i class="g84">T</i><i class="g82">R</i><i class="g69">E</i><i class="g69">E</i><i class="g84">T</i></span></div>
<div class="cell" style="left:25px;top:40px;width:63px;font-size:13.0px"><span style="right:2.2px"><i class="g49">1</i></span></div>
<div class="cell" style="left:89px;top:40px;width:63px;font-size:13.0px"><span style="right:2.2px"><i class="g49">1</i><i class="g50">2</i><i class="g51">3</i><i class="g52">4</i><i class="g53">5</i><i class="g54">6</i><i class="g55">7</i><i class="g56">8</i></span></div>
<div class="cell" style="left:153px;top:40px;width:63px;font-size:13.0px"><span style="right:2.2px"><i class="g56">8</i><i class="g48">0</i><i class="g48">0</i><i class="g48">0</i><i class="g49">1</i></span></div>
<div class="cell" style="left:217px;top:40px;width:63px;font-size:13.0px"><span style="right:2.2px"><i class="g51">3</i><i class="g48">0</i><i class="g48">0</i></span></div>
<div class="cell" style="left:281px;top:40px;width:63px;font-size:13.0px"><span style="right:2.2px"><i class="g50">2</i><i class="g48">0</i><i class="g48">0</i><i class="g57">9</i><i class="g48">0</i><i class="g57">9</i><i class="g49">1</i><i class="g52">4</i></span></div>
<div class="cell" style="left:409px;top:40px;width:63px;font-size:13.0px"><span style="right:2.2px"><i class="g49">1</i></span></div>
<div class="cell" style="left:601px;top:40px;width:63px;font-size:13.0px"><span style="left:2px"><i class="g78">N</i><i class="g55">7</i><i class="g54">6</i><i class="g54">6</i><i class="g57">9</i><i class="g54">6</i><i class="g52">4</i><i class="g47">/</i><i class="g49">1</i></span></div>
<div class="cell" style="left:665px;top:40px;width:63px;font-size:13.0px"><span style="right:2.2px"><i class="g49">1</i><i class="g54">6</i><i class="g50">2</i><i class="g51">3</i></span></div>
<div class="cell" style="left:793px;top:40px;width:63px;font-size:13.0px"><span style="left:2px"><i class="g68">D</i><i class="g85">U</i><i class="g69">E</i><i class="g32">&nbsp;</i><i class="g79">O</i><i class="g78">N</i><i class="g32">&nbsp;</i><i class="g82">R</i><i class="g69">E</i><i class="g67">C</i></span></div>
<div class="cell" style="left:857px;top:40px;width:63px;font-size:13.0px"><span style="left:2px"><i class="g78">N</i><i class="g111">o</i><i class="g114">r</i><i class="g116">t</i><i class="g104">h</i><i class="g32">&nbsp;</i><i class="g65">A</i><i class="g109">m</i><i class="g101">e</i><i class="g114">r</i><i class="g105">i</i></span></div>
<div class="cell" style="left:921px;top:40px;width:15px;font-size:13.0px"><span style="left:2px"><i class="g80">P</i><i class="g46">.</i><i class="g79">O</i><i class="g46">.</i><i class="g32">&nbsp;</i><i class="g66">B</i><i class="g111">o</i><i class="g120">x</i></span></div>
<div class="cell" style="left:25px;top:60px;width:63px;font-size:13.0px"><span style="right:2.2px"><i class="g49">1</i></span></div>
<div class="cell" style="left:89px;top:60px;width:63px;font-size:13.0px"><span style="right:2.2px"><i class="g49">1</i><i class="g50">2</i><i class="g51">3</i><i class="g52">4</i><i class="g53">5</i><i class="g54">6</i><i class="g55">7</i><i class="g56">8</i></span></div>
<div class="cell" style="left:153px;top:60px;width:63px;font-size:13.0px"><span style="right:2.2px"><i class="g49">1</i><i class="g49">1</i><i class="g55">7</i><i class="g51">3</i><i class="g54">6</i></span></div>
<div class="cell" style="left:217px;top:60px;width:63px;font-size:13.0px"><span style="right:2.2px"><i class="g51">3</i><i class="g56">8</i><i class="g52">4</i></span></div>
<div class="cell" style="left:281px;top:60px;width:63px;font-size:13.0px"><span style="right:2.2px"><i class="g50">2</i><i class="g48">0</i><i class="g48">0</i><i class="g57">9</i><i class="g49">1</i><i class="g48">0</i><i class="g48">0</i><i class="g55">7</i></span></div>
<div class="cell" style="left:409px;top:60px;width:63px;font-size:13.0px"><span style="right:2.2px"><i class="g49">1</i></span></div>
<div class="cell" style="left:601px;top:60px;width:63px;font-size:13.0px"><span style="left:2px"><i class="g78">N</i><i class="g48">0</i><i class="g52">4</i><i class="g45">-</i><i class="g54">6</i><i class="g48">0</i><i class="g45">-</i><i class="g48">0</i><i class="g56">8</i></span></div>
<div class="cell" style="left:665px;top:60px;width:63px;font-size:13.0px"><span style="right:2.2px"><i class="g49">1</i><i class="g54">6</i><i class="g50">2</i><i class="g51">3</i></span></div>
<div class="cell" style="left:793px;top:60px;width:63px;font-size:13.0px"><span style="left:2px"><i class="g78">N</i><i class="g69">E</i><i class="g84">T</i><i class="g32">&nbsp;</i><i class="g49">1</i><i class="g53">5</i></span></div>
<div class="cell" style="left:857px;top:60px;width:63px;font-size:13.0px"><span style="left:2px"><i class="g84">T</i><i class="g114">r</i><i class="g97">a</i><i class="g110">n</i><i class="g115">s</i><i class="g112">p</i><i class="g111">o</i><i class="g114">r</i><i class="g116">t</i><i class="g97">a</i><i class="g116">t</i><i class="g105">i</i></span></div>
<div class="cell" style="left:921px;top:60px;width:15px;font-size:13.0px"><span style="left:2px"><i class="g66">B</i><i class="g108">l</i><i class="g100">d</i><i class="g103">g</i></span></div>
<div class="cell" style="left:25px;top:80px;width:63px;font-size:13.0px"><span style="right:2.2px"><i class="g49">1</i></span></div>
<div class="cell" style="left:89px;top:80px;width:63px;font-size:13.0px"><span style="right:2.2px"><i class="g49">1</i><i class="g50">2</i><i class="g51">3</i><i class="g52">4</i><i class="g53">5</i><i class="g54">6</i><i class="g55">7</i><i class="g56">8</i></span></div>
<div class="cell" style="left:153px;top:80px;width:63px;font-size:13.0px"><span style="right:2.2px"><i class="g49">1</i><i class="g50">2</i><i class="g55">7</i><i class="g48">0</i><i class="g48">0</i></span></div>
<div class="cell" style="left:217px;top:80px;width:63px;font-size:13.0px"><span style="right:2.2px"><i class="g49">1</i><i class="g51">3</i><i class="g52">4</i><i class="g46">.</i><i class="g56">8</i><i class="g50">2</i></span></div>
<div class="cell" style="left:281px;top:80px;width:63px;font-size:13.0px"><span style="right:2.2px"><i class="g50">2</i><i class="g48">0</i><i class="g48">0</i><i class="g57">9</i><i class="g49">1</i><i class="g49">1</i><i class="g48">0</i><i class="g53">5</i></span></div>
<div class="cell" style="left:409px;top:80px;width:63px;font-size:13.0px"><span style="right:2.2px"><i class="g49">1</i></span></div>
<div class="cell" style="left:601px;top:80px;width:63px;font-size:13.0px"><span style="left:2px"><i class="g78">N</i><i class="g48">0</i><i class="g52">4</i><i class="g45">-</i><i class="g55">7</i><i class="g52">4</i><i class="g45">-</i><i class="g48">0</i><i class="g56">8</i></span></div>
<div class="cell" style="left:665px;top:80px;width:63px;font-size:13.0px"><span style="right:2.2px"><i class="g49">1</i><i class="g54">6</i><i class="g50">2</i><i class="g51">3</i></span></div>
<div class="cell" style="left:793px;top:80px;width:63px;font-size:13.0px"><span style="left:2px"><i class="g78">N</i><i class="g69">E</i><i class="g84">T</i><i class="g32">&nbsp;</i><i class="g49">1</i><i class="g53">5</i></span></div>
<div class="cell" style="left:857px;top:80px;width:63px;font-size:13.0px"><span style="left:2px"><i class="g66">B</i><i class="g114">r</i><i class="g97">a</i><i class="g100">d</i><i class="g32">&nbsp;</i><i class="g68">D</i><i class="g117">u</i><i class="g98">b</i><i class="g105">i</i><i class="g110">n</i></span></div>
<div class="cell" style="left:921px;top:80px;width:15px;font-size:13.0px"><span style="left:2px"><i class="g55">7</i><i class="g50">2</i><i class="g48">0</i><i class="g48">0</i></span></div>
<div class="cell" style="left:25px;top:100px;width:63px;font-size:13.0px"><span style="right:2.2px"><i class="g49">1</i></span></div>
<div class="cell" style="left:89px;top:100px;width:63px;font-size:13.0px"><span style="right:2.2px"><i class="g49">1</i><i class="g50">2</i><i class="g51">3</i><i class="g52">4</i><i class="g53">5</i><i class="g54">6</i><i class="g55">7</i><i class="g56">8</i></span></div>
<div class="cell" style="left:153px;top:100px;width:63px;font-size:13.0px"><span style="right:2.2px"><i class="g49">1</i><i class="g48">0</i><i class="g49">1</i><i class="g52">4</i><i class="g52">4</i></span></div>
<div class="cell" style="left:217px;top:100px;width:63px;font-size:13.0px"><span style="right:2.2px"><i class="g55">7</i><i class="g52">4</i><i class="g52">4</i><i class="g46">.</i><i class="g50">2</i><i class="g52">4</i></span></div>
<div class="cell" style="left:281px;top:100px;width:63px;font-size:13.0px"><span style="right:2.2px"><i class="g50">2</i><i class="g48">0</i><i class="g48">0</i><i class="g57">9</i><i class="g49">1</i><i class="g49">1</i><i class="g49">1</i><i class="g50">2</i></span></div>
<div class="cell" style="left:409px;top:100px;width:63px;font-size:13.0px"><span style="right:2.2px"><i class="g49">1</i></span></div>
<div class="cell" style="left:601px;top:100px;width:63px;font-size:13.0px"><span style="left:2px"><i class="g77">M</i><i class="g76">L</i><i class="g78">N</i><i class="g81">Q</i><i class="g48">0</i><i class="g48">0</i><i class="g48">0</i><i class="g49">1</i></span></div>
<div class="cell" style="left:665px;top:100px;width:63px;font-size:13.0px"><span style="right:2.2px"><i class="g49">1</i><i class="g54">6</i><i class="g50">2</i><i class="g51">3</i></span></div>
<div class="cell" style="left:793px;top:100px;width:63px;font-size:13.0px"><span style="left:2px"><i class="g68">D</i><i class="g85">U</i><i class="g69">E</i><i class="g32">&nbsp;</i><i class="g79">O</i><i class="g78">N</i><i class="g32">&nbsp;</i><i class="g82">R</i><i class="g69">E</i><i class="g67">C</i></span></div>
<div class="cell" style="left:857px;top:100px;width:63px;font-size:13.0px"><span style="left:2px"><i class="g65">A</i><i class="g109">m</i><i class="g98">b</i><i class="g97">a</i><i class="g115">s</i><i class="g115">s</i><i class="g97">a</i><i class="g100">d</i><i class="g111">o</i><i class="g114">r</i></span></div>
<div class="cell" style="left:921px;top:100px;width:15px;font-size:13.0px"><span style="left:2px"><i class="g53">5</i><i class="g56">8</i><i class="g48">0</i><i class="g48">0</i></span></div>
<div class="a" style="left:936px;top:19px;width:1px;height:247px;background:#a6a6a6"></div>
<div class="a" style="left:23px;top:18px;width:67px;height:23px;border:2px solid #217346"></div>
<div class="a" style="left:85px;top:36px;width:6px;height:6px;background:#217346;border-left:1px solid #fff;border-top:1px solid #fff"></div>
</div>
<!--VSCROLL-->
<div class="a" style="left:939px;top:288px;width:22px;height:267px;background:#e6e6e6"></div>
<div class="a" style="left:942px;top:305px;width:15px;height:236px;background:#dadada"></div>
<div class="a" style="left:942px;top:290px;width:15px;height:15px;background:#fff;border:1px solid #ababab"></div>
<svg class="a" style="left:942px;top:290px" width="15" height="15"><path d="M4 9 h7 l-3.500 -4 z" fill="#707070"/></svg>
<div class="a" style="left:942px;top:305px;width:15px;height:141px;background:#fff;border:1px solid #ababab"></div>
<div class="a" style="left:942px;top:541px;width:15px;height:13px;background:#fff;border:1px solid #ababab"></div>
<svg class="a" style="left:942px;top:541px" width="15" height="13"><path d="M4 5 h7 l-3.500 4 z" fill="#707070"/></svg>
<!--SHEETBAR-->
<div id="sheetbar" class="a"></div>
<div class="a" style="left:2px;top:554px;width:937px;height:1px;background:#a6a6a6"></div>
<div class="a" style="left:2px;top:582px;width:958px;height:1px;background:#c9c9c9"></div>
<svg class="a" style="left:20px;top:560px" width="50" height="14"><path d="M12.300 4 v7.200 l-4.300 -3.600 z" fill="#c4c4c4"/><path d="M36.800 4 v7.200 l4.300 -3.600 z" fill="#c4c4c4"/></svg>
<div class="a" style="left:101px;top:554px;width:104px;height:24px;background:#fff;border-left:1px solid #a6a6a6;border-right:1px solid #a6a6a6"></div>
<div class="a" style="left:101px;top:576px;width:104px;height:2px;background:#217346"></div>
<div class="t" style="left:113.2px;top:562.2px;font-size:12.7px;color:#1e7145;letter-spacing:-0.18px;font-weight:bold;">Batch 000001</div>
<svg class="a" style="left:237px;top:559px" width="18" height="18" fill="none" stroke="#6a6a6a" stroke-width="1.2"><circle cx="9.300" cy="8.800" r="7.200"/><path d="M9.300 5 V12.600 M5.500 8.800 H13.100" stroke-width="1.700"/></svg>
<svg class="a" style="left:575px;top:562px" width="4" height="12" fill="#a6a6a6"><rect x="1" y="1" width="2" height="2"/><rect x="1" y="5" width="2" height="2"/><rect x="1" y="9" width="2" height="2"/></svg>
<div class="a" style="left:608px;top:561px;width:316px;height:15px;background:#dadada"></div>
<div class="a" style="left:593px;top:561px;width:15px;height:15px;background:#fff;border:1px solid #ababab"></div>
<svg class="a" style="left:593px;top:561px" width="15" height="15"><path d="M9 4 v7 l-4 -3.500 z" fill="#707070"/></svg>
<div class="a" style="left:608px;top:561px;width:158px;height:15px;background:#fff;border:1px solid #ababab"></div>
<div class="a" style="left:926px;top:561px;width:15px;height:15px;background:#fff;border:1px solid #ababab"></div>
<svg class="a" style="left:926px;top:561px" width="15" height="15"><path d="M6 4 v7 l4 -3.500 z" fill="#707070"/></svg>
<!--STATUS-->
<div id="status" class="a"></div>
<div class="a" style="left:662px;top:583px;width:38px;height:20px;background:#c8c8c8"></div>
<svg class="a" style="left:660px;top:582px" width="260" height="21" fill="none" stroke="#666" stroke-width="1.2">
<rect x="15.500" y="4.800" width="12.500" height="12.200"/><path d="M19.700 4.800 V17 M23.800 4.800 V17 M15.500 8.900 H28 M15.500 12.900 H28"/>
<rect x="53.500" y="4.800" width="13" height="12.200" stroke-width="1.100"/><rect x="56.800" y="7.700" width="6.700" height="6.600" stroke-width="1"/><path d="M58.500 9.500 h3.500 M58.500 11 h3.500 M58.500 12.500 h3.500" stroke-width="0.700"/>
<rect x="91.500" y="4.800" width="13" height="12.200" stroke-width="1.100"/><path d="M95.800 4.800 V11.200 M100.200 4.800 V11.200 H91.500" stroke-width="1.100"/>
<path d="M122 10.800 H128" stroke-width="2" stroke="#555"/>
<path d="M132.500 10.500 H232" stroke="#8a8a8a" stroke-width="1"/>
<rect x="180.300" y="4.800" width="5" height="11" fill="#737373" stroke="none"/>
<path d="M236.300 10.700 H242.800 M239.550 7.450 V13.950" stroke-width="1.800" stroke="#555"/>
</svg>
<div class="t" style="left:914.2px;top:586.3px;font-size:11.5px;color:#444;letter-spacing:0.00px;transform-origin:0 0;transform:scaleX(0.907);">100%</div>
<div id="frame2" class="a"></div>
<div id="frame" class="a"></div>
</body>
</html>
